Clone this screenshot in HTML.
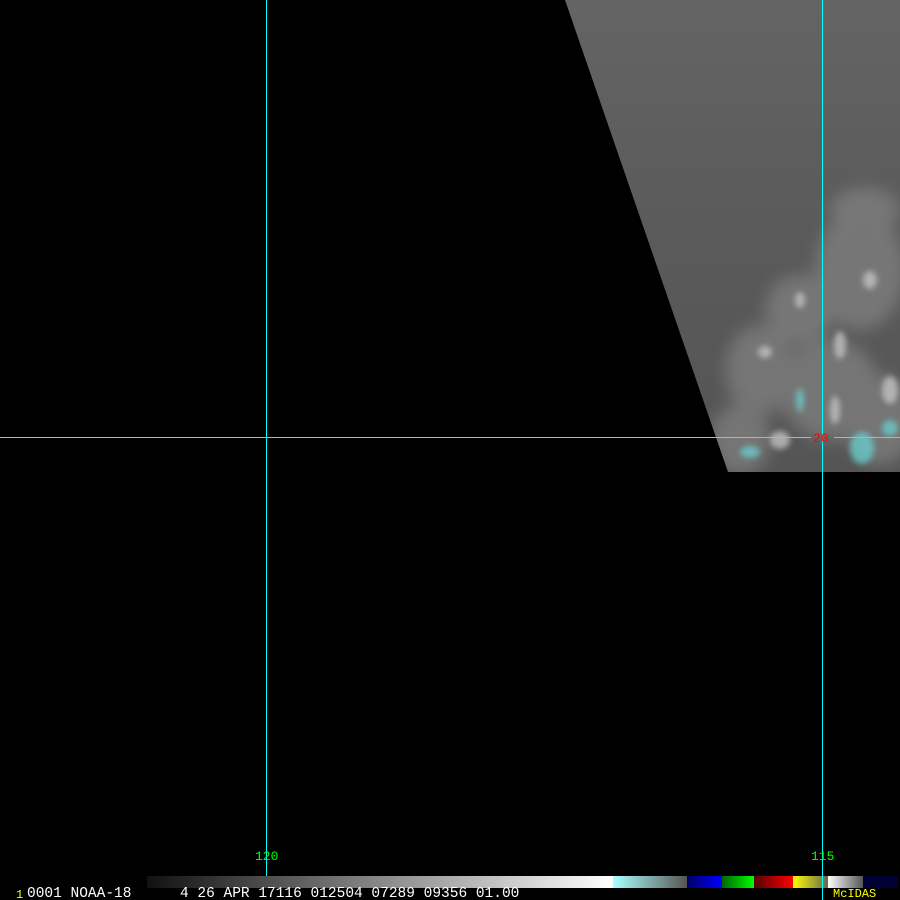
<!DOCTYPE html>
<html><head><meta charset="utf-8"><style>
html,body{margin:0;padding:0;background:#000;width:900px;height:900px;overflow:hidden}
svg{display:block}
text{font-family:"Liberation Mono",monospace}
</style></head><body>
<svg width="900" height="900" viewBox="0 0 900 900" xmlns="http://www.w3.org/2000/svg" shape-rendering="crispEdges">
<defs>
<linearGradient id="g" x1="0" y1="0" x2="0" y2="1">
<stop offset="0" stop-color="#646464"/>
<stop offset="0.5" stop-color="#5a5a5a"/>
<stop offset="1" stop-color="#555"/>
</linearGradient>
<clipPath id="c"><polygon points="565,0 900,0 900,472 728,472"/></clipPath>
<filter id="b" x="-50%" y="-50%" width="200%" height="200%"><feGaussianBlur stdDeviation="8"/></filter>
<filter id="b2" x="-50%" y="-50%" width="200%" height="200%"><feGaussianBlur stdDeviation="3"/></filter>
</defs>
<rect width="900" height="900" fill="#000"/>
<polygon points="565,0 900,0 900,472 728,472" fill="url(#g)" shape-rendering="auto"/>
<g clip-path="url(#c)" shape-rendering="auto">
<g filter="url(#b)" fill="#8a8a8a" opacity="0.6">
<ellipse cx="860" cy="270" rx="45" ry="60"/>
<ellipse cx="800" cy="310" rx="35" ry="35"/>
<ellipse cx="760" cy="370" rx="35" ry="45"/>
<ellipse cx="830" cy="390" rx="50" ry="50"/>
<ellipse cx="740" cy="440" rx="30" ry="35"/>
<ellipse cx="880" cy="420" rx="35" ry="45"/>
<ellipse cx="865" cy="210" rx="35" ry="22"/>
</g>
<g filter="url(#b2)" fill="#c8c8c8" opacity="0.75">
<ellipse cx="765" cy="352" rx="7" ry="6"/>
<ellipse cx="840" cy="345" rx="6" ry="14"/>
<ellipse cx="835" cy="410" rx="5" ry="14"/>
<ellipse cx="780" cy="440" rx="10" ry="9"/>
<ellipse cx="890" cy="390" rx="8" ry="14"/>
<ellipse cx="800" cy="300" rx="5" ry="8"/>
<ellipse cx="870" cy="280" rx="7" ry="9"/>
</g>
<g fill="#6ad6d6" opacity="0.7" filter="url(#b2)">
<ellipse cx="800" cy="400" rx="4" ry="12"/>
<ellipse cx="750" cy="452" rx="10" ry="6"/>
<ellipse cx="862" cy="448" rx="12" ry="16"/>
<ellipse cx="890" cy="428" rx="8" ry="8"/>
</g>
</g>
<rect x="266" y="0" width="1" height="876" fill="#0ff"/>
<rect x="822" y="0" width="1" height="900" fill="#0ff"/>
<rect x="0" y="437" width="811" height="1" fill="#0ff"/>
<rect x="834" y="437" width="66" height="1" fill="#0ff"/>
<text x="813" y="442" font-size="13" fill="#f00">20</text>
<text x="255" y="860" font-size="13" fill="#0f0">120</text>
<text x="811" y="860" font-size="13" fill="#0f0">115</text>
<defs>
<linearGradient id="gr" x1="0" x2="1"><stop offset="0" stop-color="#111"/><stop offset="1" stop-color="#fff"/></linearGradient>
<linearGradient id="cy" x1="0" x2="1"><stop offset="0" stop-color="#aff"/><stop offset="1" stop-color="#555"/></linearGradient>
<linearGradient id="bl" x1="0" x2="1"><stop offset="0" stop-color="#006"/><stop offset="1" stop-color="#00f"/></linearGradient>
<linearGradient id="gn" x1="0" x2="1"><stop offset="0" stop-color="#060"/><stop offset="1" stop-color="#0f0"/></linearGradient>
<linearGradient id="rd" x1="0" x2="1"><stop offset="0" stop-color="#500"/><stop offset="1" stop-color="#f00"/></linearGradient>
<linearGradient id="yl" x1="0" x2="1"><stop offset="0" stop-color="#ff0"/><stop offset="1" stop-color="#665"/></linearGradient>
<linearGradient id="wg" x1="0" x2="1"><stop offset="0" stop-color="#fff"/><stop offset="1" stop-color="#555"/></linearGradient>
</defs>
<rect x="147" y="876" width="466" height="12" fill="url(#gr)"/>
<rect x="613" y="876" width="74" height="12" fill="url(#cy)"/>
<rect x="687" y="876" width="35" height="12" fill="url(#bl)"/>
<rect x="722" y="876" width="32" height="12" fill="url(#gn)"/>
<rect x="754" y="876" width="39" height="12" fill="url(#rd)"/>
<rect x="793" y="876" width="35" height="12" fill="url(#yl)"/>
<rect x="828" y="876" width="35" height="12" fill="url(#wg)"/>
<rect x="863" y="876" width="35" height="12" fill="#003"/>
<rect x="822" y="876" width="1" height="24" fill="#0ff"/>
<text x="16" y="898" font-size="12" fill="#ff0">1</text>
<text x="27" y="897" font-size="14.5" fill="#fff">0001 NOAA-18</text>
<text x="180" y="897" font-size="14.5" fill="#fff">4 26 APR 17116 012504 07289 09356 01.00</text>
<text x="833" y="897" font-size="12" fill="#ff0">McIDAS</text>
</svg>
</body></html>
